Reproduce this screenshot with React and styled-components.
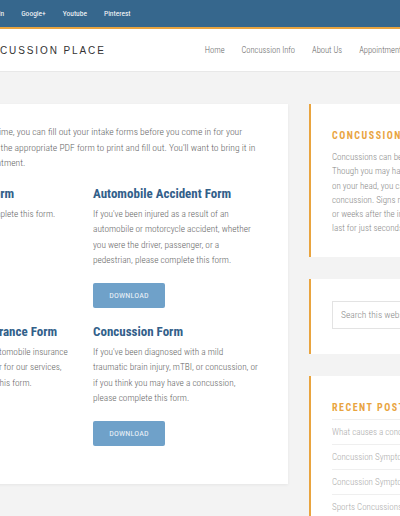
import React from 'react'
import styled, { createGlobalStyle } from 'styled-components'

const condensed = `"Roboto Condensed", "Liberation Sans Narrow", "DejaVu Sans Condensed", Roboto, sans-serif`

const socialLinks = ['Facebook', 'Twitter', 'LinkedIn', 'Google+', 'Youtube', 'Pinterest']
const navLinks = ['Home', 'Concussion Info', 'About Us', 'Appointments', 'Contact']

const forms = [
  {
    title: 'Personal History Form',
    lines: ['All new patients, please complete this form.'],
  },
  {
    title: 'Automobile Accident Form',
    lines: [
      "If you've been injured as a result of an",
      'automobile or motorcycle accident, whether',
      'you were the driver, passenger, or a',
      'pedestrian, please complete this form.',
    ],
  },
  {
    title: 'Family Vehicle Insurance Form',
    lines: [
      'If you are using your own automobile insurance',
      'to act as your principal payer for our services,',
      'for billing, please complete this form.',
    ],
  },
  {
    title: 'Concussion Form',
    lines: [
      "If you've been diagnosed with a mild",
      'traumatic brain injury, mTBI, or concussion, or',
      'if you think you may have a concussion,',
      'please complete this form.',
    ],
  },
]

const aboutLines = [
  'Concussions can be serious brain injuries.',
  'Though you may have no visible cuts',
  'on your head, you can still have a',
  'concussion. Signs may appear days',
  'or weeks after the injury, and may',
  'last for just seconds or for months.',
]

const recentPosts = [
  'What causes a concussion?',
  'Concussion Symptoms in Children',
  'Concussion Symptoms in Adults',
  'Sports Concussions: What to Know',
]

function App() {
  return (
    <>
      <GlobalStyle />
      <TopBar>
        <Social>
          {socialLinks.map((s) => (
            <li key={s}>{s}</li>
          ))}
        </Social>
      </TopBar>

      <Header>
        <Logo>CONCUSSION PLACE</Logo>
        <Nav>
          {navLinks.map((n) => (
            <a key={n}>{n}</a>
          ))}
        </Nav>
      </Header>

      <Content>
        <Card>
          <Intro>
            If you'd like to save some time, you can fill out your intake forms before you come in for your
            <br />
            initial visit. Simply click on the appropriate PDF form to print and fill out. You'll want to bring it in
            <br />
            with you to the next appointment.
          </Intro>
          <FormGrid>
            {forms.map((f) => (
              <FormItem key={f.title}>
                <FormTitle>{f.title}</FormTitle>
                <FormText>
                  {f.lines.map((l, i) => (
                    <span key={i}>{l}</span>
                  ))}
                </FormText>
                <Download>Download</Download>
              </FormItem>
            ))}
          </FormGrid>
        </Card>

        <Sidebar>
          <Widget>
            <WidgetTitle>Concussions</WidgetTitle>
            <WidgetText>
              {aboutLines.map((l, i) => (
                <span key={i}>{l}</span>
              ))}
            </WidgetText>
          </Widget>

          <Widget $search>
            <SearchInput placeholder="Search this website …" />
          </Widget>

          <Widget>
            <WidgetTitle>Recent Posts</WidgetTitle>
            <PostList>
              {recentPosts.map((p) => (
                <li key={p}>{p}</li>
              ))}
            </PostList>
          </Widget>
        </Sidebar>
      </Content>
    </>
  )
}

export default App

const GlobalStyle = createGlobalStyle`
  html, body {
    margin: 0;
    padding: 0;
    background: #f3f3f3;
    overflow: hidden;
  }
  body {
    width: 400px;
    height: 516px;
    font-family: ${condensed};
    -webkit-font-smoothing: antialiased;
  }
  * { box-sizing: border-box; }
`

const TopBar = styled.div`
  height: 29px;
  background: #36678d;
  border-bottom: 2px solid #e9a43f;
  display: flex;
  align-items: center;
  overflow: hidden;
`

const Social = styled.ul`
  display: flex;
  gap: 17px;
  margin: 0 0 0 -104px;
  padding: 0;
  list-style: none;
  font-size: 7.5px;
  font-weight: 400;
  color: #fff;
  white-space: nowrap;
`

const Header = styled.header`
  height: 43px;
  background: #fff;
  border-bottom: 1px solid #e8e8e8;
  display: flex;
  align-items: center;
  gap: 99px;
  white-space: nowrap;
`

const Logo = styled.div`
  margin-left: -28px;
  font-family: "Liberation Sans", sans-serif;
  font-size: 10px;
  letter-spacing: 1.9px;
  color: #333;
`

const Nav = styled.nav`
  display: flex;
  gap: 17px;
  font-size: 8.5px;
  font-weight: 300;
  color: #666;

  a { cursor: pointer; }
`

const Content = styled.div`
  display: flex;
  align-items: flex-start;
  gap: 21px;
  margin-left: -130px;
  padding-top: 32px;
`

const Card = styled.main`
  flex: none;
  width: 418px;
  background: #fff;
  box-shadow: 0 1px 3px rgba(0, 0, 0, 0.06);
  padding: 20px 20px 38px 28px;
  color: #666;
  font-weight: 300;
  font-size: 9.3px;
  line-height: 15.5px;
`

const Intro = styled.p`
  margin: 0 0 14px 3px;
  font-size: 9.6px;
  white-space: nowrap;
`

const FormGrid = styled.div`
  display: grid;
  grid-template-columns: 175px 175px;
  column-gap: 20px;
  row-gap: 15px;
`

const FormItem = styled.section`
  display: flex;
  flex-direction: column;
  align-items: flex-start;
`

const FormTitle = styled.h3`
  margin: 0 0 3px;
  font-size: 13px;
  line-height: 18px;
  font-weight: 700;
  color: #32608a;
  white-space: nowrap;
`

const FormText = styled.p`
  margin: 0 0 15px;
  display: flex;
  flex-direction: column;
  white-space: nowrap;
`

const Download = styled.button`
  flex: none;
  width: 72px;
  height: 25px;
  padding: 0;
  border: none;
  border-radius: 2px;
  background: #6fa1c9;
  color: #eef4f9;
  font-family: ${condensed};
  font-size: 8px;
  letter-spacing: 0.2px;
  text-transform: uppercase;
  cursor: pointer;
  margin-top: auto;
`

const Sidebar = styled.aside`
  flex: none;
  width: 220px;
  display: flex;
  flex-direction: column;
  gap: 22px;
`

const Widget = styled.div`
  background: #fff;
  border-left: 2px solid #e9a43f;
  padding: ${(p) => (p.$search ? '22px 0 25px 21px' : '26px 0 21px 21px')};
`

const WidgetTitle = styled.h4`
  margin: 0 0 8px;
  font-size: 10px;
  line-height: 12px;
  font-weight: 700;
  letter-spacing: 1.5px;
  text-transform: uppercase;
  color: #e9a43f;
  white-space: nowrap;
`

const WidgetText = styled.p`
  margin: 0;
  display: flex;
  flex-direction: column;
  font-size: 9px;
  line-height: 14.3px;
  font-weight: 300;
  color: #888;
  white-space: nowrap;
`

const SearchInput = styled.input`
  display: block;
  width: 180px;
  height: 28px;
  border: 1px solid #e3e3e3;
  padding: 0 8px;
  font-family: ${condensed};
  font-size: 9.5px;
  font-weight: 300;
  color: #666;
  outline: none;

  &::placeholder { color: #888; }
`

const PostList = styled.ul`
  list-style: none;
  margin: -3px 0 0;
  padding: 0;
  font-size: 9px;
  font-weight: 300;
  color: #aaa;
  white-space: nowrap;

  li {
    height: 25px;
    line-height: 24px;
    border-top: 1px solid #efefef;
  }
`
